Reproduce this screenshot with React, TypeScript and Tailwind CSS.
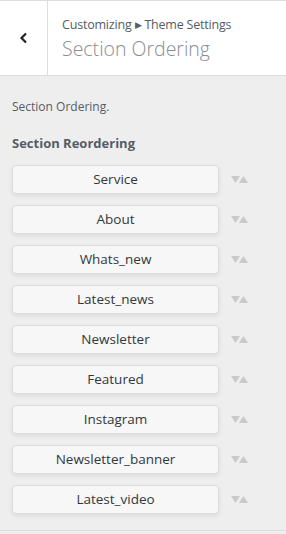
import React from 'react';

const sections = [
  'Service',
  'About',
  'Whats_new',
  'Latest_news',
  'Newsletter',
  'Featured',
  'Instagram',
  'Newsletter_banner',
  'Latest_video',
];

function Arrows() {
  return (
    <div className="flex items-center">
      <svg width="9" height="7" viewBox="0 0 9 7" className="block">
        <polygon points="0,0 9,0 4.5,7" fill="#c9c9c9" />
      </svg>
      <svg width="9" height="7" viewBox="0 0 9 7" className="block -ml-[1px]">
        <polygon points="0,7 9,7 4.5,0" fill="#c9c9c9" />
      </svg>
    </div>
  );
}

export default function App() {
  return (
    <div
      className="w-[286px] h-[534px] bg-[#eeeeee] flex flex-col overflow-hidden"
      style={{ fontFamily: '"Open Sans", "Noto Sans", sans-serif' }}
    >
      <div className="h-[76px] bg-white border-t border-b border-[#dddddd] flex shrink-0">
        <div className="w-[48px] border-r border-[#dddddd] flex items-center justify-center">
          <svg width="10" height="12" viewBox="0 0 10 12">
            <path d="M7 1.5 L2.5 6 L7 10.5" fill="none" stroke="#222" strokeWidth="2.2" />
          </svg>
        </div>
        <div className="pl-[14px] pt-[15px] flex flex-col">
          <div className="text-[12.5px] leading-[18px] text-[#555d66] tracking-[-0.2px]">
            Customizing <span className="text-[9px] align-[1px]">▶</span> Theme Settings
          </div>
          <div className="text-[19.5px] leading-[26px] font-light text-[#888e94] mt-[2px]">
            Section Ordering
          </div>
        </div>
      </div>

      <div className="flex-1 px-[12px] pt-[23px]">
        <div className="text-[12px] leading-[16px] text-[#555d66]">Section Ordering.</div>
        <div className="text-[13px] leading-[18px] font-bold text-[#555d66] mt-[19px]">
          Section Reordering
        </div>
        <div className="flex flex-col gap-[11px] mt-[13px]">
          {sections.map((name) => (
            <div key={name} className="flex items-center">
              <div className="w-[207px] h-[29px] bg-[#f7f7f7] border border-[#dcdcdc] rounded-[4px] shadow-[0_2px_4px_rgba(0,0,0,0.08)] flex items-center justify-center text-[13.5px] text-[#32373c]">
                {name}
              </div>
              <div className="ml-[12px]">
                <Arrows />
              </div>
            </div>
          ))}
        </div>
      </div>

      <div className="h-[4px] border-t border-[#dddddd] bg-[#eeeeee] shrink-0" />
    </div>
  );
}
